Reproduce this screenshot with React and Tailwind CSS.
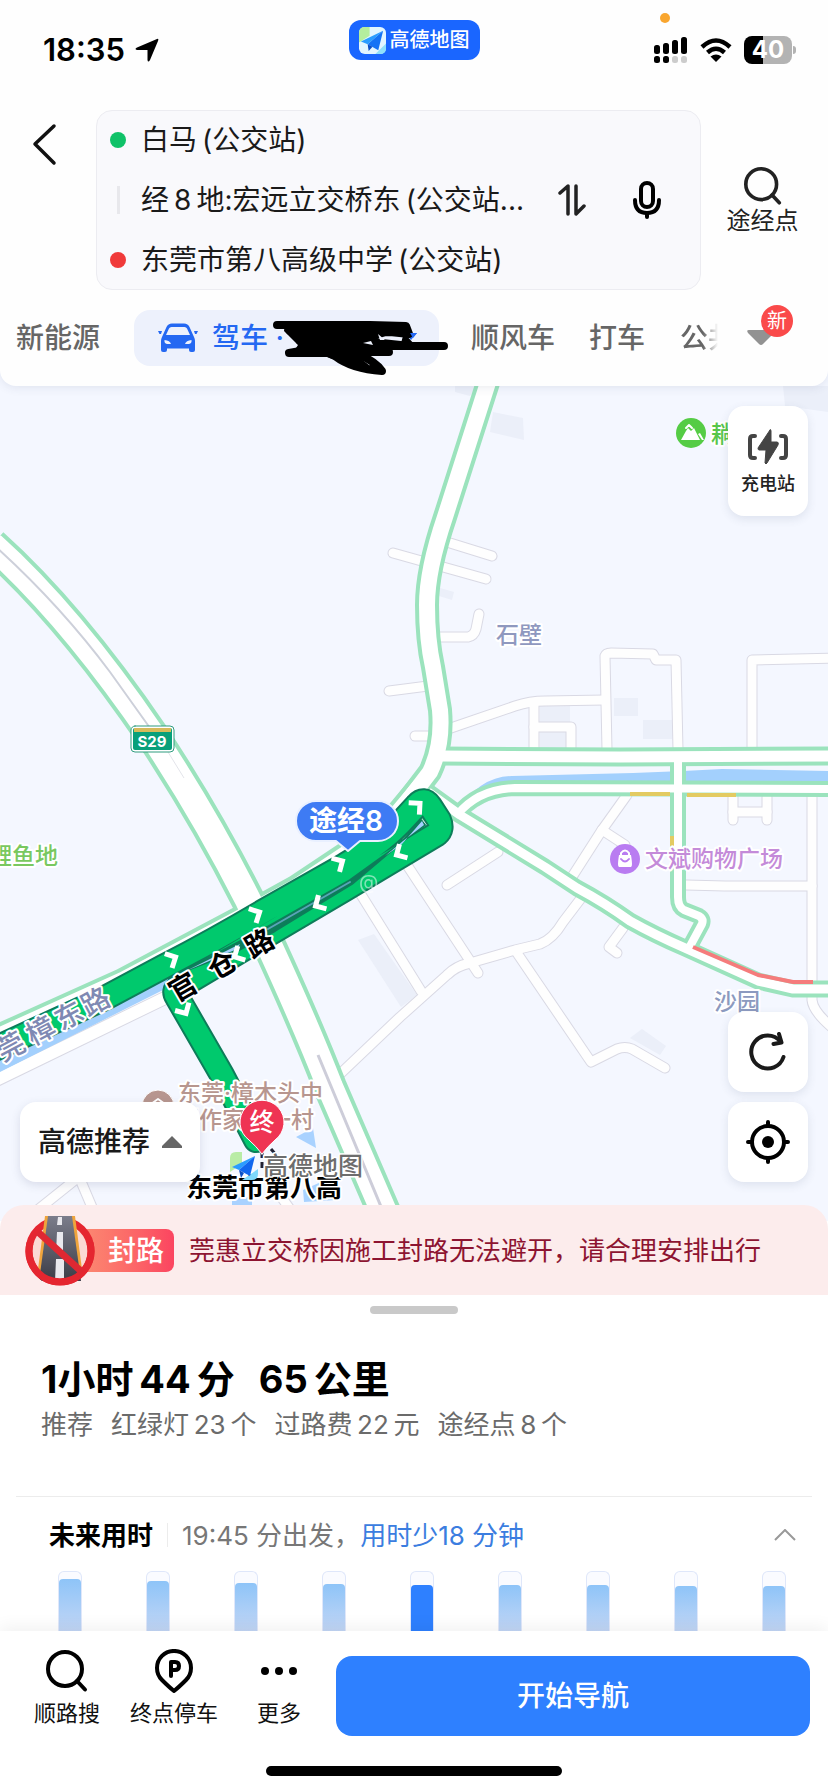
import { useState } from "react";
import clsx from "clsx";

const FUTURE_TIMES = [
  { id: 1, level: 88 },
  { id: 2, level: 85 },
  { id: 3, level: 82 },
  { id: 4, level: 80 },
  { id: 5, level: 78 },
  { id: 6, level: 78 },
  { id: 7, level: 78 },
  { id: 8, level: 77 },
  { id: 9, level: 76 },
];

const GREEN_ROADS = [
  { d: "M-8 545 Q70 615 152 735 Q205 815 248 900 Q300 1010 330 1087 L394 1235", w: 34 },
  { d: "M492 370 L445 517 Q427 570 427 605 Q427 640 433 667 L440 710 Q443 745 430 772 L395 818", w: 24 },
  { d: "M-8 1046 L125 986 L240 925 L300 892 L390 832 L425 790", w: 37 },
  { d: "M440 756 L620 757 L840 756", w: 19 },
  { d: "M457 815 Q478 789 515 788 L840 789", w: 16 },
  { d: "M678 760 V897 Q678 907 684 910 L699 916 Q704 919 702 924 L688 950", w: 16 },
  { d: "M428 792 L460 815 L545 867 L577 888 Q605 903 630 921 Q655 935 685 948 L758 981 L793 989 H840", w: 17 },
];

const MINOR_ROADS = [
  "M393 553 L486 579",
  "M450 543 L492 556",
  "M435 637 H468 Q474 636 476 629 L479 614",
  "M389 691 L428 686",
  "M415 736 H432",
  "M448 729 L515 706 Q530 701 545 701 L605 700",
  "M534 704 V750",
  "M534 727 H571 V750",
  "M607 750 L605 656 Q606 653 611 653 L653 654 L656 660 H676 L678 750",
  "M752 750 V660 L835 658",
  "M627 795 L602 830 L570 880",
  "M602 830 L625 845",
  "M582 897 L563 922 Q553 939 540 944 L515 950 L470 963 Q456 966 447 975 L400 1017 L340 1074",
  "M447 885 L498 852",
  "M405 862 L478 973",
  "M360 893 L421 991",
  "M517 953 L591 1062 L617 1049 Q625 1046 632 1049 L665 1068",
  "M623 928 L609 947 L617 953",
  "M733 797 V820",
  "M767 797 V820",
  "M733 812 H767",
  "M812 795 V1000 Q813 1012 835 1030",
  "M686 885 L725 886 H812",
  "M35 1212 L85 1172",
  "M77 1172 L94 1212",
  "M282 1198 L292 1212",
];

const BUILDINGS = [
  "M455 386 L478 386 L470 396 L455 392Z",
  "M493 412 L523 418 L524 440 L490 432Z",
  "M783 386 H828 V412 L785 406Z",
  "M440 588 L454 592 L452 600 L439 596Z",
  "M614 698 H638 V716 H614Z",
  "M643 720 H672 V739 H643Z",
  "M540 706 H570 V722 H540Z",
  "M540 732 H566 V748 H540Z",
  "M642 1029 L666 1046 L660 1055 L630 1038Z",
  "M358 940 L374 934 L417 995 L401 1007Z",
];

const ROUTE =
  "M-8 1050 L105 998 L163 967 Q215 940 264 911 L345 865 Q385 841 405 818 L417 805 Q424 797 430 806 L439 820 Q443 829 437 834 L345 889 L262 938 L178 988 Q173 991 177 997 L222 1075 L256 1140";

// direction ticks along the route
const ARROWS = [
  { x: 172, y: 959, r: -27 },
  { x: 256, y: 914, r: -27 },
  { x: 339, y: 863, r: -30 },
  { x: 417, y: 806, r: -42 },
  { x: 400, y: 853, r: 150 },
  { x: 319, y: 904, r: 150 },
  { x: 238, y: 955, r: 152 },
  { x: 184, y: 1010, r: 60 },
];

function AmapLogo({ className }) {
  return (
    <svg viewBox="0 0 28 28" className={className} aria-hidden="true">
      <rect width="28" height="28" rx="6" fill="#e3f6ff" />
      <path d="M0 6 Q0 0 6 0 H11 V9 L0 16Z" fill="#b4ee9d" />
      <path d="M17 28 L28 17 V22 Q28 28 22 28Z" fill="#8fe0fb" />
      <path d="M25 4 L2 15 L9 18Z" fill="#2a9dff" />
      <path d="M25 4 L9 18 L20 24Z" fill="#1473f5" />
      <path d="M9 18 L10 25 L14 20.500Z" fill="#0c4fc4" />
    </svg>
  );
}

function SearchIcon({ className }) {
  return (
    <svg viewBox="0 0 42 42" className={className} fill="none" stroke="currentColor" strokeWidth="4" strokeLinecap="round" aria-hidden="true">
      <circle cx="19" cy="19" r="17" />
      <path d="M31 31 L39 39.500" />
    </svg>
  );
}

function StatusBar() {
  return (
    <div className="relative grid h-[100px] grid-cols-[1fr_auto_1fr] items-center">
      <div className="flex items-center gap-[10px] pl-[43px]">
        <span className="text-[31px] font-semibold leading-9 text-black">18:35</span>
        <svg viewBox="0 0 24 24" className="size-6" aria-hidden="true">
          <path d="M22 1 Q24 0 23 3 L15 22 Q13 25 12.500 22 V12 H2 Q-1 11 2 9.500Z" fill="#000" />
        </svg>
      </div>
      <div className="mt-5 flex h-10 items-center gap-1 self-start rounded-xl bg-[#1a66ff] px-[10px]">
        <AmapLogo className="size-[27px]" />
        <span className="text-[20px] font-medium leading-none text-white">高德地图</span>
      </div>
      <div className="flex items-center justify-end gap-3 pr-[32px]">
        <svg viewBox="0 0 34 28" className="h-7 w-[34px]" aria-hidden="true">
          <rect x="0" y="9" width="6" height="9" rx="2.500" />
          <rect x="9" y="7" width="6" height="11" rx="2.500" />
          <rect x="18" y="4" width="6" height="14" rx="2.500" />
          <rect x="27" y="1" width="6" height="17" rx="2.500" />
          <rect x="0" y="20" width="6" height="7" rx="2.500" />
          <rect x="9" y="20" width="6" height="7" rx="2.500" />
          <rect x="18" y="20" width="6" height="7" rx="2.500" fill="#ccc" />
          <rect x="27" y="20" width="6" height="7" rx="2.500" fill="#ccc" />
        </svg>
        <svg viewBox="0 0 32 24" className="h-6 w-8" fill="none" stroke="#000" strokeWidth="4.500" aria-hidden="true">
          <path d="M2 9 Q16 -4 30 9" />
          <path d="M7.500 14.500 Q16 7 24.500 14.500" />
          <path d="M16 24 L10.500 18.500 Q16 14.500 21.500 18.500Z" fill="#000" stroke="none" />
        </svg>
        <div className="flex items-center gap-px">
          <div className="flex h-7 w-12 items-center justify-center rounded-lg bg-linear-to-r from-black from-40% to-[#b3b3b3] to-40% text-[24px] font-bold leading-none text-white">
            40
          </div>
          <div className="h-2 w-[3px] rounded-r-full bg-[#b3b3b3]" />
        </div>
      </div>
      <span className="absolute right-[158px] top-[13px] size-[10px] rounded-full bg-[#f9a62f]" />
    </div>
  );
}

function RoutePoint({ marker, children }) {
  return (
    <button type="button" className="flex h-[60px] w-full min-w-0 items-center gap-[15px] text-left">
      <span className="flex w-4 shrink-0 justify-center">{marker}</span>
      <span className="whitespace-nowrap">{children}</span>
    </button>
  );
}

function RouteForm() {
  return (
    <div className="mt-[10px] flex">
      <button type="button" aria-label="返回" className="ml-[30px] mt-[13px] h-11 w-[66px] shrink-0">
        <svg viewBox="0 0 30 44" className="h-11 w-[30px]" fill="none" stroke="#111" strokeWidth="3.500" strokeLinecap="round" strokeLinejoin="round">
          <path d="M24 3 L5 21 L24 40" />
        </svg>
      </button>
      <div className="flex min-w-0 flex-1 items-center rounded-2xl border border-[#ececf1] bg-[#f9f9fc] pl-[13px] text-[28px] text-[#1a1a1a]">
        <div className="min-w-0 flex-1 -my-px">
          <RoutePoint marker={<span className="size-4 rounded-full bg-[#10c268]" />}>白马&thinsp;(公交站)</RoutePoint>
          <RoutePoint marker={<span className="h-7 w-[3px] bg-[#e8e8ec]" />}>经&thinsp;8&thinsp;地:宏远立交桥东&thinsp;(公交站...</RoutePoint>
          <RoutePoint marker={<span className="size-4 rounded-full bg-[#f03a3a]" />}>东莞市第八高级中学&thinsp;(公交站)</RoutePoint>
        </div>
        <button type="button" aria-label="交换起终点" className="mr-[46px] shrink-0">
          <svg viewBox="0 0 28 34" className="h-[34px] w-7" fill="none" stroke="#222" strokeWidth="3.500" strokeLinecap="round" strokeLinejoin="round">
            <path d="M2 10 L10 3 V31" />
            <path d="M18 3 V31 L26 23" />
          </svg>
        </button>
        <button type="button" aria-label="语音输入" className="mr-[38px] shrink-0">
          <svg viewBox="0 0 30 40" className="h-10 w-[30px]" fill="none" stroke="#000" strokeWidth="4" strokeLinecap="round">
            <rect x="9" y="3" width="12" height="24" rx="6" />
            <path d="M3 20 Q3 33 15 33 Q27 33 27 20" />
            <path d="M15 34 V37" />
          </svg>
        </button>
      </div>
      <button type="button" className="flex w-[127px] shrink-0 flex-col items-center pt-[57px] pr-1 text-[#222]">
        <SearchIcon className="size-[38px]" />
        <span className="text-[24px] leading-8">途经点</span>
      </button>
    </div>
  );
}

function CarIcon() {
  return (
    <svg viewBox="0 0 40 30" className="h-[30px] w-10 shrink-0" fill="#2468f2" aria-hidden="true">
      <path fillRule="evenodd" d="M4 14 L8.500 4 Q10 0.500 14 0.500 H26 Q30 0.500 31.500 4 L36 14 Q37 16 37 18 V27 Q37 29 35 29 H33 Q31 29 31 27 V25.500 H9 V27 Q9 29 7 29 H5 Q3 29 3 27 V18 Q3 16 4 14Z M8 12 H32 L29 5.500 Q28.300 4 26.500 4 H13.500 Q11.700 4 11 5.500Z M6.500 17 Q6 20.500 9 21 H13 Q12 17.500 6.500 17Z M33.500 17 Q34 20.500 31 21 H27 Q28 17.500 33.500 17Z" />
      <path d="M0 8 H4 L3 11 H1.500Z M40 8 H36 L37 11 H38.500Z" />
    </svg>
  );
}

function Scribble() {
  return (
    <svg viewBox="270 318 182 62" className="pointer-events-none absolute left-[136px] top-2 h-[62px] w-[182px]" aria-hidden="true">
      <path d="M405 333 H417 L411 340Z" fill="#2468f2" />
      <g fill="none" stroke="#000" strokeLinecap="round" strokeLinejoin="round" strokeWidth="8">
        <path d="M277 325 H370 L406 326 L409 334 L390 332 L300 333 L372 342 L410 346 H444 H395 L340 340 L290 331 L350 352 H389 L340 344 L289 353 H350" />
        <path d="M300 341 L335 356 Q352 369 382 371 Q376 362 358 354 L330 348" />
      </g>
      <path d="M285 322 H372 L404 324 L410 336 L388 335 L362 345 L360 358 L378 372 L345 364 L310 350 L290 357 L298 345 L284 331Z" />
      <path d="M404 333 L416 346 L400 346Z" />
      <path d="M363 343 L371 341 L373 345Z M378 334 L385 340 H380Z" fill="#edf1fc" />
      <path d="M410 333 H417 L413 338Z" fill="#2468f2" />
    </svg>
  );
}

function ModeTabs() {
  const [active, setActive] = useState("drive");
  const tab = "shrink-0 whitespace-nowrap text-[28px] font-medium text-[#666]";
  return (
    <nav className="mt-5 flex h-14 items-center pl-4" aria-label="出行方式">
      <button type="button" className={tab} onClick={() => setActive("ev")}>新能源</button>
      <div className="relative ml-[34px] shrink-0">
        <button
          type="button"
          aria-pressed={active === "drive"}
          onClick={() => setActive("drive")}
          className="flex h-14 w-[305px] items-center gap-[14px] rounded-2xl bg-[#edf1fc] pl-6 text-[28px] font-medium text-[#2468f2]"
        >
          <CarIcon />
          <span>驾车 ·</span>
        </button>
        <Scribble />
      </div>
      <button type="button" className={clsx(tab, "ml-8")} onClick={() => setActive("share")}>顺风车</button>
      <button type="button" className={clsx(tab, "ml-[34px]")} onClick={() => setActive("taxi")}>打车</button>
      <button
        type="button"
        onClick={() => setActive("bus")}
        className={clsx(tab, "ml-[35px] w-[38px] overflow-hidden text-left mask-r-from-60% mask-r-to-100%")}
      >
        公共
      </button>
      <button type="button" aria-label="更多出行方式" className="relative ml-7 shrink-0">
        <svg viewBox="0 0 30 18" className="h-[18px] w-[30px]" fill="#929292">
          <path d="M3 1 H27 Q30 1 28 4 L17 15 Q15 17 13 15 L2 4 Q0 1 3 1Z" />
        </svg>
        <span className="absolute -top-6 left-[15px] flex size-8 items-center justify-center rounded-full bg-[#fa4a4a] text-[20px] leading-none text-white">
          新
        </span>
      </button>
    </nav>
  );
}

function MapCanvas() {
  return (
    <svg
      viewBox="0 370 828 851"
      preserveAspectRatio="xMidYMid slice"
      className="absolute inset-0 size-full font-['Inter','Noto_Sans_CJK_SC',sans-serif]"
      fill="none"
      strokeLinecap="round"
      strokeLinejoin="round"
    >
      <rect y="370" width="828" height="851" fill="#f4f7ff" />
      {BUILDINGS.map((d) => (
        <path key={d} d={d} fill="#ebeff9" />
      ))}
      <path d="M296 1137 L313 1128 L316 1148 Z M303 1190 L330 1178 L336 1200 L304 1202Z M232 1197 H252 V1206 H232Z" fill="#a9d2ff" />
      <path d="M457 812 Q480 776 512 776 L633 773 L683 771 L722 769 L828 771 V786 H512 Q480 786 463 812Z" fill="#a3d0fd" />

      {MINOR_ROADS.map((d) => (
        <path key={d} d={d} stroke="#d9d9e4" strokeWidth="11" />
      ))}
      {MINOR_ROADS.map((d) => (
        <path key={d} d={d} stroke="#fefefe" strokeWidth="9" />
      ))}

      <path d="M-8 1082 L165 998" stroke="#d9d9e4" strokeWidth="14" />
      <path d="M-8 1082 L165 998" stroke="#fff" strokeWidth="12" />

      {GREEN_ROADS.map((road) => (
        <path key={road.d} d={road.d} stroke="#9be3bd" strokeWidth={road.w} strokeLinecap="butt" />
      ))}
      {GREEN_ROADS.map((road) => (
        <path key={road.d} d={road.d} stroke="#fff" strokeWidth={road.w - 8} strokeLinecap="butt" />
      ))}
      <g strokeLinecap="butt">
        <path d="M-4 547 Q60 605 110 672 L150 728" stroke="#cdd0da" strokeWidth="2" />
        <path d="M168 752 L184 778" stroke="#e3e4ea" strokeWidth="1" />
        <path d="M318 1055 L345 1120 L387 1221" stroke="#cdcdd9" strokeWidth="3" />
        <path d="M630 794 H670 M687 795 H736 M672 836 V846" stroke="#e3cb62" strokeWidth="4" />
        <path d="M693 947 L758 975 L793 982 H813" stroke="#f57c7c" strokeWidth="4" />
      </g>

      <path d="M-4 1050 L110 1000 L205 955 L245 950 L167 988 L-4 1074Z" fill="#a3d0fd" />

      <path d={ROUTE} stroke="#0d7d5a" strokeWidth="26" />
      <path d={ROUTE} stroke="#00c96d" strokeWidth="22" />
      <path d="M182 972 L267 927 L350 880 L400 844 L421 820 L425 825 L403 841 L352 884 L275 931 L237 951Z" fill="#0d7d5a" stroke="#0d7d5a" strokeWidth="2" />
      <path d="M186 971 L240 944 L237 949Z M385 856 L402 844 L422 821 L424 825 L403 841Z" fill="#a3d0fd" />
      <path d="M268 929 L350 882" stroke="#5aa3b8" strokeWidth="2" />
      {ARROWS.map((a) => (
        <path
          key={`${a.x}-${a.y}`}
          d="M-4 -8 L4 0 L-4 8"
          transform={`translate(${a.x} ${a.y}) rotate(${a.r})`}
          stroke="#fff"
          strokeWidth="5"
          strokeLinecap="butt"
          strokeLinejoin="miter"
        />
      ))}
      <text x="359" y="889" fontSize="20" fill="#fff" opacity="0.5">@</text>

      {/* road shield */}
      <rect x="131" y="726" width="43" height="26" rx="4" fill="#fff" stroke="#2f9c7f" strokeWidth="1" />
      <rect x="133" y="728" width="39" height="22" rx="2" fill="#08a07a" />
      <path d="M134 728 H171 V732 H134Z" fill="#d6ba5a" />
      <text x="152" y="747" fontSize="15" fontWeight="700" fill="#fff" textAnchor="middle">S29</text>

      <circle cx="158" cy="1106" r="16" fill="#b7968f" stroke="#fff" strokeWidth="1" />
      <path d="M151 1104 L158 1099 L165 1104" stroke="#fff" strokeWidth="2" />

      {/* place names, each with a light halo */}
      <g stroke="#fff" strokeWidth="4" paintOrder="stroke" fontSize="23" fontWeight="500">
        <text x="496" y="643" fill="#8f98bf">石壁</text>
        <text x="714" y="1010" fill="#8c9abf">沙园</text>
        <text x="711" y="442" fill="#58c64a">耥</text>
        <text x="-11" y="864" fill="#79c860">鲤鱼地</text>
        <text x="645" y="867" fill="#c48bd9">文斌购物广场</text>
        <text x="178" y="1101" fill="#b7968f">东莞·樟木头中</text>
        <text x="176" y="1128" fill="#b7968f">国作家第一村</text>
        <text x="0 34 66 96" y="0" fontSize="28" fill="#7f89b3" transform="translate(3 1062) rotate(-28)">莞樟东路</text>
        <text x="0 45 88" y="0" fontSize="28" fontWeight="700" fill="#000" transform="translate(176 1003) rotate(-30)">官仓路</text>
      </g>

      <circle cx="691" cy="433" r="15" fill="#55cc45" />
      <path d="M681 440 L686 431 L688 428 L691 431 L694 428 L700 440Z M698 434 L700 433 L704 440 H702Z" fill="#fff" stroke="none" />
      <path d="M686 428 L689 425 L692 428" stroke="#fff" strokeWidth="2" />

      <circle cx="625" cy="859" r="15" fill="#b97cf1" />
      <path d="M619 855 H631 Q633 867 631 867 H619 Q617 867 619 855Z" fill="#fff" />
      <path d="M621 856 V853 Q625 848 629 853 V856" stroke="#fff" strokeWidth="2" />
      <path d="M621 859 Q625 864 629 859" stroke="#b97cf1" strokeWidth="2" />

      {/* waypoint bubble */}
      <path d="M316 801 H378 A20 20 0 0 1 378 841 H360 L348 851 L336 841 H316 A20 20 0 0 1 316 801Z" fill="#3e7bf4" stroke="#e9f0ff" strokeWidth="2" />
      <text x="346" y="831" fontSize="28" fontWeight="600" fill="#fff" textAnchor="middle">途经8</text>

      <text x="186" y="1197" fontSize="26" fontWeight="700" fill="#000" stroke="#fff" strokeWidth="4" paintOrder="stroke">东莞市第八高</text>
      <path d="M271 1149 L282 1162 M262 1152 V1172" stroke="#223" strokeWidth="3" strokeDasharray="6 4" strokeLinecap="butt" />
      <path d="M262 1154 Q256 1146 249 1140 A22 22 0 1 1 275 1140 Q268 1146 262 1154Z" fill="#ef3453" stroke="#fff" strokeWidth="1" />
      <text x="262" y="1131" fontSize="25" fontWeight="500" fill="#fff" textAnchor="middle">终</text>

      <g transform="translate(230 1152)">
        <path d="M0 6 Q0 0 6 0 H12 V12 L0 20Z" fill="#b9eca6" />
        <path d="M12 28 L28 17 V22 Q28 28 22 28Z" fill="#7fd8fb" />
        <path d="M25 4 L2 15 L9 18Z" fill="#2a9dff" />
        <path d="M25 4 L9 18 L20 24Z" fill="#1167ee" />
        <path d="M9 18 L11 26 L14 21Z" fill="#0c4fc4" />
      </g>
      <text x="263" y="1175" fontSize="25" fontWeight="500" fill="#6d6d6d" stroke="#fff" strokeWidth="3" paintOrder="stroke">高德地图</text>
    </svg>
  );
}

function RouteMap() {
  const card = "flex w-20 flex-col items-center justify-center rounded-2xl bg-white shadow-[0_3px_10px_rgba(60,70,110,0.12)]";
  return (
    <main className="relative -my-4 h-[851px] overflow-hidden">
      <MapCanvas />
      <button type="button" className={clsx(card, "absolute right-5 top-9 h-[110px] gap-1 pt-1 text-[#222]")}>
        <svg viewBox="0 0 42 38" className="h-[38px] w-[42px]" fill="none" stroke="#444" strokeWidth="4" strokeLinecap="round">
          <path d="M8 8 H6 Q3 8 3 11 V27 Q3 30 6 30 H8" />
          <path d="M34 8 H36 Q39 8 39 11 V27 Q39 30 36 30 H34" />
          <path d="M23 2 L11 20 Q11 22 12 22 H19 L18 35 Q19 37 20 35 L31 17 Q32 14 30 14 H24 L24 3 Q24 1 23 2Z" fill="#444" stroke="#444" strokeWidth="1" />
        </svg>
        <span className="text-[18px] font-medium leading-7">充电站</span>
      </button>
      <div className="absolute bottom-[39px] right-5 flex flex-col gap-[10px]">
        <button type="button" aria-label="刷新路线" className={clsx(card, "h-20")}>
          <svg viewBox="0 0 40 40" className="size-10" fill="none" stroke="#1a1a1a" strokeWidth="4" strokeLinecap="round" strokeLinejoin="round">
            <path d="M35.500 25 A16.500 16.500 0 1 1 32.500 9.500" />
            <path d="M31 2 L33.500 10.500 L25.500 12" />
          </svg>
        </button>
        <button type="button" aria-label="定位" className={clsx(card, "h-20")}>
          <svg viewBox="0 0 44 44" className="size-11" fill="none" stroke="#000" strokeWidth="4" strokeLinecap="round">
            <circle cx="22" cy="22" r="16" />
            <path d="M22 2 V6 M22 38 V42 M2 22 H6 M38 22 H42" />
            <circle cx="22" cy="22" r="6" fill="#000" stroke="none" />
          </svg>
        </button>
      </div>
      <button
        type="button"
        className="absolute bottom-[39px] left-5 flex h-20 w-[180px] items-center justify-center gap-3 rounded-2xl bg-white text-[28px] font-medium text-[#1a1a1a] shadow-[0_3px_10px_rgba(60,70,110,0.15)]"
      >
        高德推荐
        <svg viewBox="0 0 20 12" className="h-3 w-5" fill="#666" aria-hidden="true">
          <path d="M10 0 L20 10 V12 H0 V10Z" />
        </svg>
      </button>
    </main>
  );
}

function ClosureBanner() {
  return (
    <section className="relative flex h-[90px] items-center rounded-t-3xl bg-[#fcecec] pl-[25px]" aria-label="封路提醒">
      <svg viewBox="0 0 70 71" className="relative z-10 h-[71px] w-[70px] shrink-0" aria-hidden="true">
        <defs>
          <linearGradient id="road" x1="0" y1="0" x2="0" y2="1">
            <stop offset="0" stopColor="#7b7d8b" />
            <stop offset="1" stopColor="#3c3d47" />
          </linearGradient>
          <clipPath id="roadClip">
            <path d="M0 0 H70 V40 A31 31 0 0 1 4 40Z" />
          </clipPath>
        </defs>
        <circle cx="35" cy="36" r="31" fill="#fbd9d4" stroke="#e52630" strokeWidth="7" />
        <g clipPath="url(#roadClip)">
          <path d="M20 1 H50 L58 62 H12Z" fill="#efa43c" />
          <path d="M23 1 H47 L56 66 H14Z" fill="url(#road)" />
          <path d="M33 2 H37 L37 10 H32Z M32 17 H38 L38 38 H31Z M31 44 H39 V66 H30Z" fill="#e9e9ee" />
        </g>
        <path d="M5 28 A31 31 0 1 0 65 28" fill="none" stroke="#e52630" strokeWidth="7" />
        <path d="M13 17 L57 57" stroke="#df2832" strokeWidth="7" />
      </svg>
      <span className="-ml-4 mt-px flex h-[43px] w-[95px] items-center justify-end rounded-lg bg-linear-to-r from-[#fb8b72] to-[#fb4460] pr-[10px] text-[28px] font-medium leading-none text-white">
        封路
      </span>
      <p className="ml-[15px] whitespace-nowrap text-[26px] text-[#8d1431]">莞惠立交桥因施工封路无法避开，请合理安排出行</p>
    </section>
  );
}

function FutureTimes() {
  return (
    <>
      <div className="mt-[18px] flex h-10 items-center pl-[49px] pr-8 text-[26px]">
        <h2 className="font-bold text-black">未来用时</h2>
        <span className="mx-[14px] h-6 w-px bg-[#ececec]" />
        <p className="text-[#777]">
          19:45 分出发，<a href="#future" className="text-[#3b7de0]">用时少18 分钟</a>
        </p>
        <button type="button" aria-label="收起" className="ml-auto">
          <svg viewBox="0 0 22 12" className="h-3 w-[22px]" fill="none" stroke="#999" strokeWidth="2">
            <path d="M1 11 L11 1 L21 11" />
          </svg>
        </button>
      </div>
      <div className="mt-4 flex h-[60px] justify-between overflow-hidden pl-[58px] pr-[42px]">
        {FUTURE_TIMES.map((slot) => (
          <div key={slot.id} className="flex h-full w-6 flex-col justify-end rounded-t-md border-x border-t border-[#dfe7fa] bg-[#fafbff]">
            <div
              className={clsx(
                "rounded-t-sm",
                slot.id === 5 ? "bg-[#2e80ff]" : "bg-linear-to-b from-[#8ec4f8] to-[#c2d6f5]"
              )}
              style={{ height: `${slot.level}%` }}
            />
          </div>
        ))}
      </div>
    </>
  );
}

function RouteSheet() {
  return (
    <section className="flex-1 bg-white">
      <div className="pt-[11px]">
        <div className="mx-auto h-2 w-[88px] rounded-full bg-[#c9c9c9]" />
      </div>
      <h1 className="mt-[43px] flex gap-6 whitespace-nowrap pl-[41px] text-[38px] font-bold leading-[44px] text-black">
        <span>1小时&thinsp;44&thinsp;分</span>
        <span>65&thinsp;公里</span>
      </h1>
      <p className="mt-1 flex gap-[18px] whitespace-nowrap pl-[41px] text-[26px] leading-10 text-[#6b6b6b]">
        <span>推荐</span>
        <span>红绿灯&thinsp;23&thinsp;个</span>
        <span>过路费&thinsp;22&thinsp;元</span>
        <span>途经点&thinsp;8&thinsp;个</span>
      </p>
      <hr className="mx-4 mt-[51px] border-[#ececec]" />
      <FutureTimes />
    </section>
  );
}

function BottomBar() {
  const item = "flex shrink-0 flex-col items-center gap-1 text-[22px] leading-8 text-[#111]";
  return (
    <footer className="relative bg-white pb-4 shadow-[0_-4px_16px_rgba(0,0,0,0.06)]">
      <div className="flex items-start pl-[19px] pr-[18px] pt-[18px]">
        <button type="button" className={clsx(item, "w-24")}>
          <SearchIcon className="h-11 w-[42px] text-black" />
          顺路搜
        </button>
        <button type="button" className={clsx(item, "w-[118px]")}>
          <svg viewBox="0 0 40 44" className="h-11 w-10" fill="none" stroke="#000" strokeWidth="4" strokeLinecap="round" strokeLinejoin="round" aria-hidden="true">
            <path d="M20 42 Q15 38 8 31 A17 17 0 1 1 32 31 Q25 38 20 42Z" />
            <path d="M17 27 V13 H21 Q25 13 25 17 Q25 21 21 21 H17" />
          </svg>
          终点停车
        </button>
        <button type="button" className={clsx(item, "w-[92px]")}>
          <svg viewBox="0 0 36 44" className="h-11 w-9" aria-hidden="true">
            <circle cx="4" cy="22" r="4" />
            <circle cx="18" cy="22" r="4" />
            <circle cx="32" cy="22" r="4" />
          </svg>
          更多
        </button>
        <button type="button" className="ml-[11px] mt-[7px] h-20 flex-1 rounded-2xl bg-[#2e80ff] text-[28px] font-medium text-white">
          开始导航
        </button>
      </div>
      <div className="mx-auto mt-[30px] h-[10px] w-[296px] rounded-full bg-black" />
    </footer>
  );
}

export default function App() {
  return (
    <div className="flex min-h-screen flex-col overflow-hidden bg-white font-['Inter','Noto_Sans_CJK_SC',sans-serif]">
      <header className="relative z-10 rounded-b-2xl bg-[#fefefe] pb-5 shadow-[0_2px_10px_rgba(60,70,110,0.1)]">
        <StatusBar />
        <RouteForm />
        <ModeTabs />
      </header>
      <RouteMap />
      <ClosureBanner />
      <RouteSheet />
      <BottomBar />
    </div>
  );
}
